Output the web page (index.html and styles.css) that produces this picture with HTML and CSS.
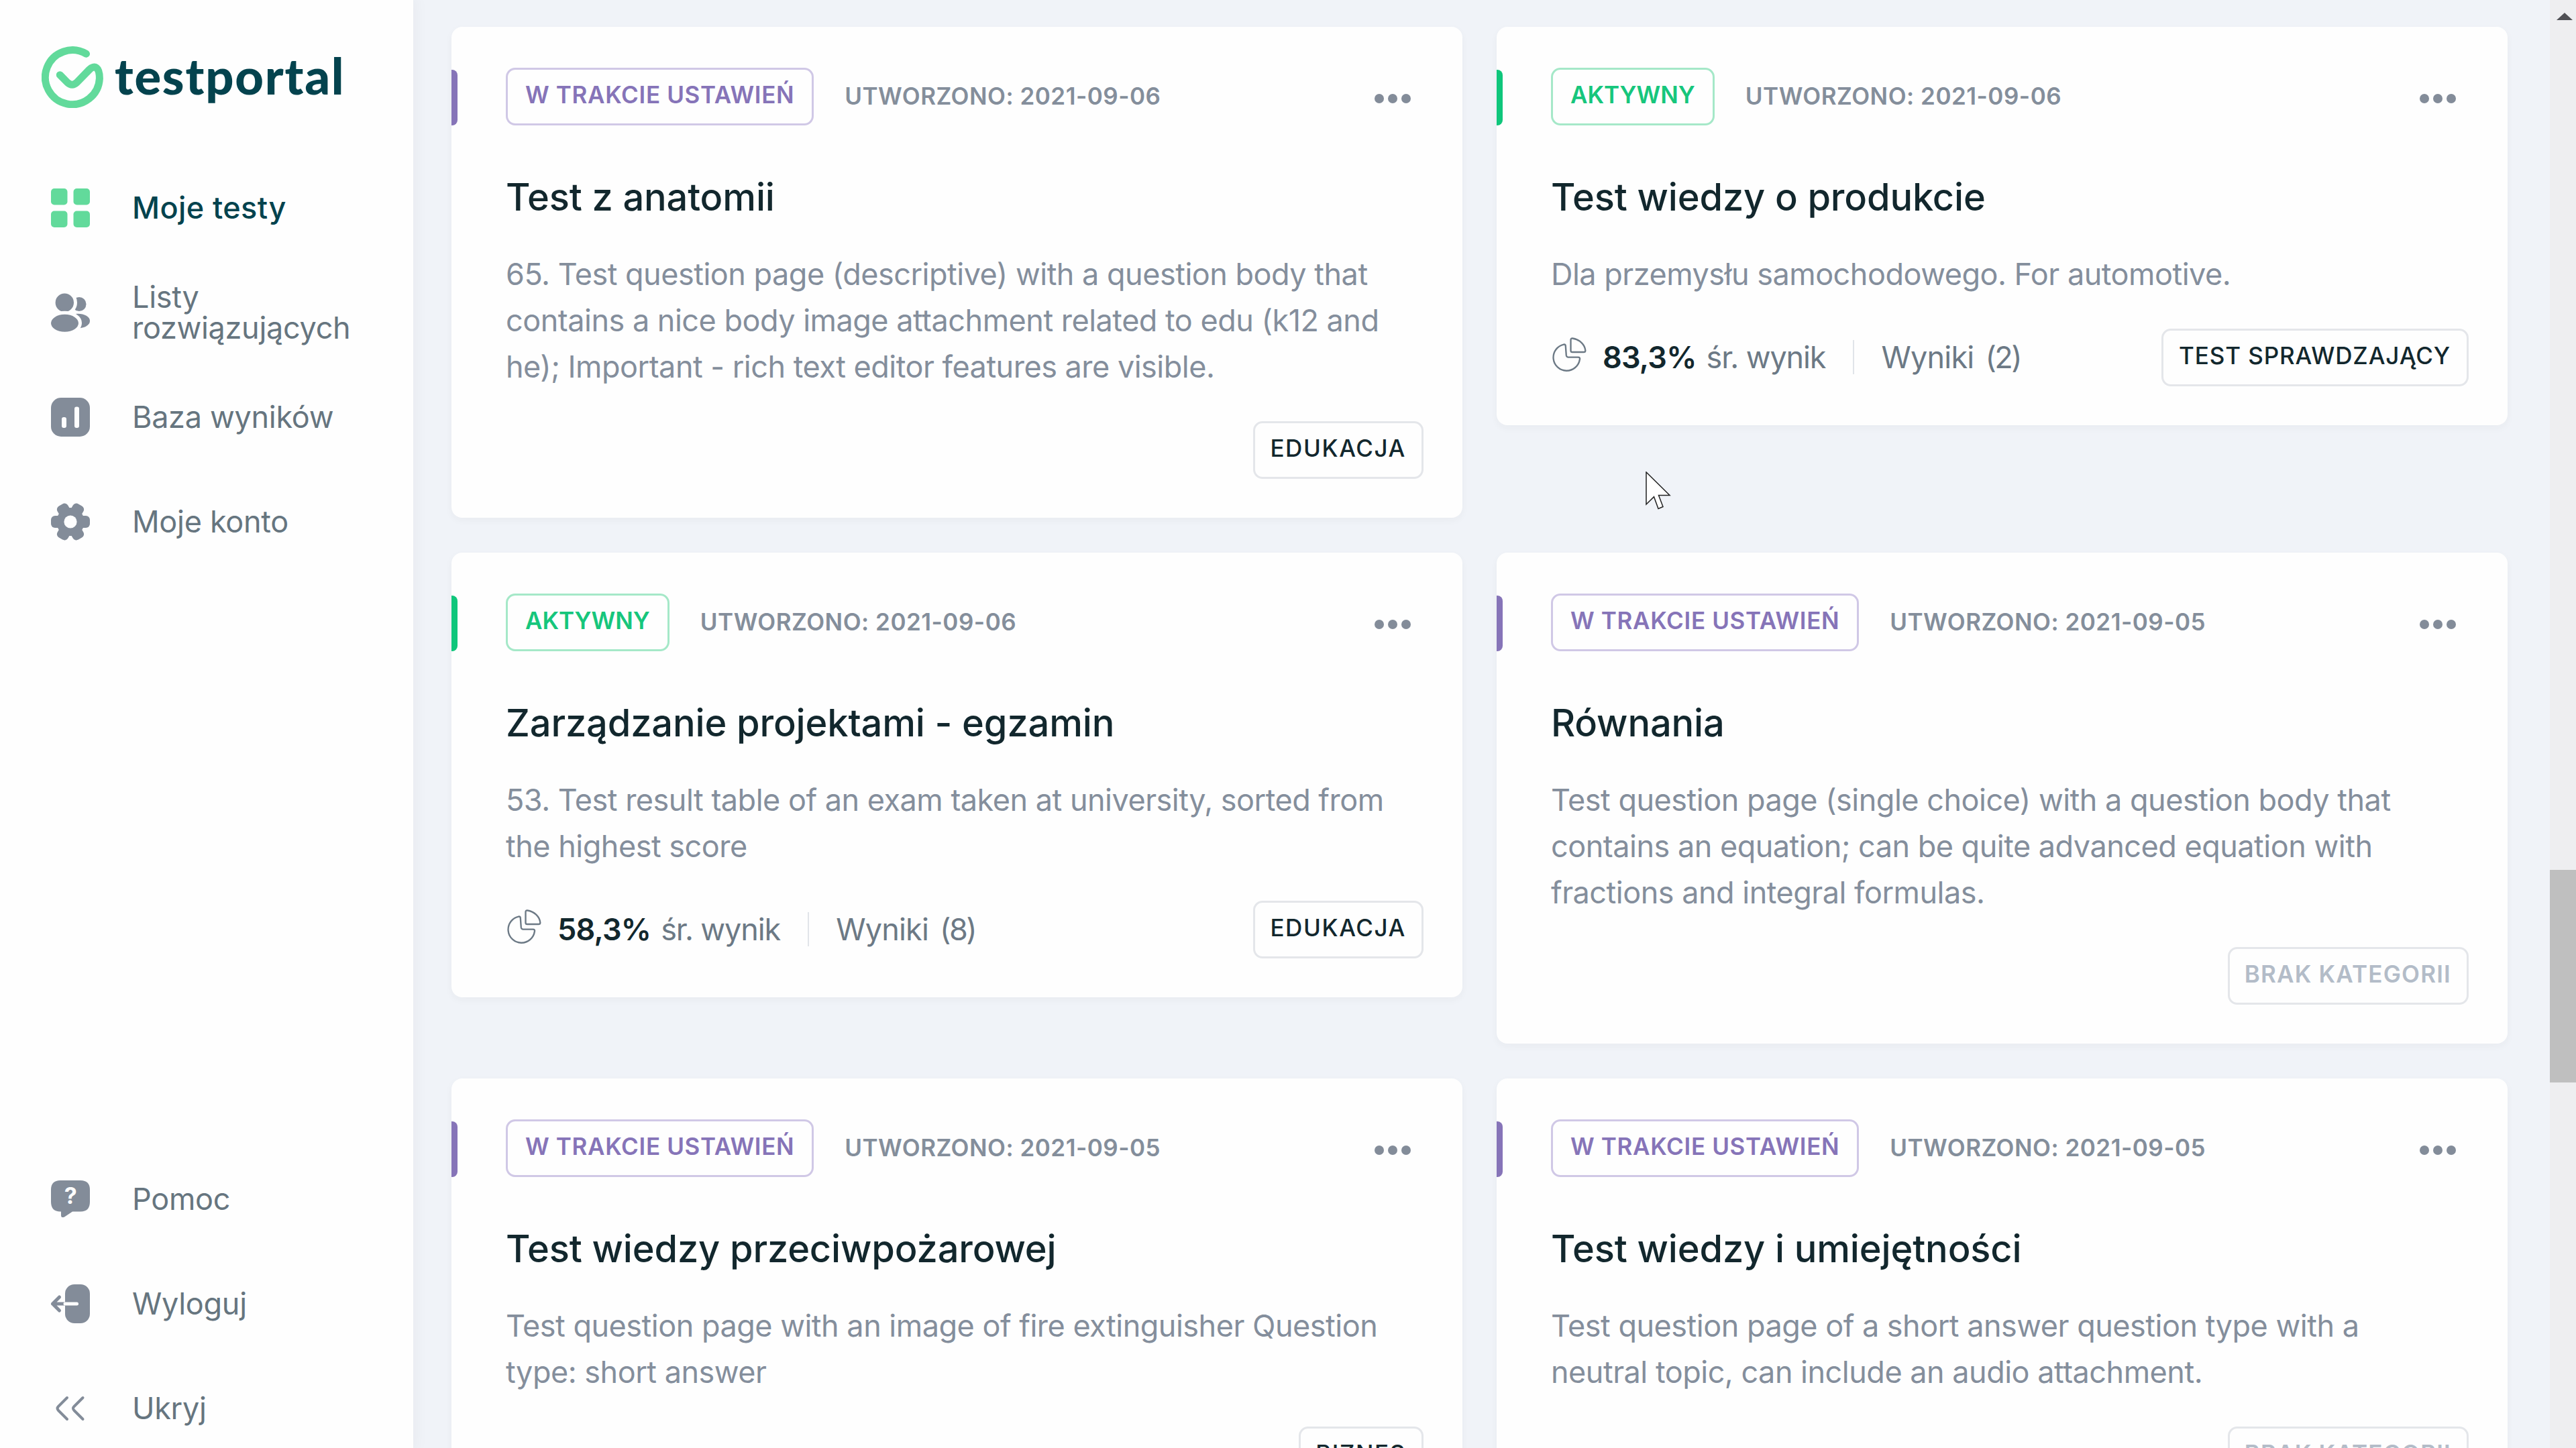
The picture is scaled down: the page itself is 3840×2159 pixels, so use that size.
FILE: index.html
```
<!DOCTYPE html>
<html lang="pl">
<head>
    <meta charset="UTF-8">
    <meta name="viewport" content="width=device-width, initial-scale=1.0">
    <title>Testportal - Moje testy</title>
    <link rel="stylesheet" href="styles.css">
</head>
<body>
    <!-- shared icons -->
    <svg class="sprite" aria-hidden="true">
        <symbol id="icon-pie" viewBox="42 36 152 154">
            <path d="M124 50 Q124 42 132 43 C162 47 186 70 189 97 Q189 104 181 104 L131 104 Q124 104 124 97 Z"/>
            <path d="M93 70 A59 59 0 1 0 164 136 Q166 127 157 127 L112 127 Q105 126 104 118 L101 76 Q100 69 93 70 Z"/>
        </symbol>
    </svg>

    <div class="layout">
        <aside class="sidebar">
            <div class="sidebar-top">
                <div class="logo">
                    <svg class="logo-mark" viewBox="12 19 92 92">
                        <path d="M78.5 30.3 A40.5 40.5 0 1 0 98.4 67 C98.4 50 91 46 83 54 L64.5 73 Q57.5 79.5 50.5 73 L39.3 61.7"/>
                    </svg>
                    <span class="logo-text">testportal</span>
                </div>
                <nav class="menu">
                    <a class="menu-item active">
                        <svg class="icon" viewBox="0 0 58 58">
                            <rect width="24.5" height="24.5" rx="5"/>
                            <rect x="33.5" width="24.5" height="24.5" rx="5"/>
                            <rect y="33.5" width="24.5" height="24.5" rx="5"/>
                            <rect x="33.5" y="33.5" width="24.5" height="24.5" rx="5"/>
                        </svg>
                        <span>Moje testy</span>
                    </a>
                    <a class="menu-item">
                        <svg class="icon" viewBox="0 0 58 58">
                            <circle cx="42" cy="16.5" r="10.5"/>
                            <ellipse cx="40" cy="41.5" rx="18" ry="10.8"/>
                            <circle class="cutout" cx="20.3" cy="14.3" r="16.2"/>
                            <ellipse class="cutout" cx="20.5" cy="44.8" rx="23" ry="15.5"/>
                        </svg>
                        <span>Listy<br>rozwiązujących</span>
                    </a>
                    <a class="menu-item">
                        <svg class="icon" viewBox="0 0 58 58">
                            <rect width="58" height="58" rx="15"/>
                            <rect class="white" x="16" y="29" width="7" height="16" rx="3"/>
                            <rect class="white" x="35" y="13.5" width="7" height="31.5" rx="3"/>
                        </svg>
                        <span>Baza wyników</span>
                    </a>
                    <a class="menu-item">
                        <svg class="icon" viewBox="0 0 58 58">
                            <circle cx="29" cy="29" r="21"/>
                            <rect y="20" width="58" height="18" rx="6"/>
                            <rect y="20" width="58" height="18" rx="6" transform="rotate(60 29 29)"/>
                            <rect y="20" width="58" height="18" rx="6" transform="rotate(120 29 29)"/>
                            <circle class="white" cx="29" cy="29" r="9.6"/>
                        </svg>
                        <span>Moje konto</span>
                    </a>
                </nav>
            </div>
            <nav class="menu menu-bottom">
                <a class="menu-item">
                    <svg class="icon" viewBox="0 0 58 58">
                        <path d="M14 1 H44 Q58 1 58 15 V33 Q58 47.5 44 47.5 H32 L20 55.5 Q15 57.5 15 53 V47.5 H14 Q0 47.5 0 33 V15 Q0 1 14 1 Z"/>
                        <text class="question" x="29" y="36" text-anchor="middle">?</text>
                    </svg>
                    <span>Pomoc</span>
                </a>
                <a class="menu-item">
                    <svg class="icon" viewBox="0 0 58 58">
                        <rect x="21" width="37" height="58" rx="14"/>
                        <path class="line" d="M21 29 H2.5 M12.5 19 L2.5 29 L12.5 39"/>
                        <path class="line line-white" d="M21 29 H38.5"/>
                    </svg>
                    <span>Wyloguj</span>
                </a>
                <a class="menu-item">
                    <svg class="icon" viewBox="0 0 58 58">
                        <path class="line line-thin" d="M24 13 L11 26 Q8 29 11 32 L24 45 M47.5 13 L34.5 26 Q31.5 29 34.5 32 L47.5 45"/>
                    </svg>
                    <span>Ukryj</span>
                </a>
            </nav>
        </aside>

        <main class="tests">
            <article class="card draft">
                <div class="card-header">
                    <span class="tag status">W TRAKCIE USTAWIEŃ</span>
                    <span class="date">UTWORZONO: 2021-09-06</span>
                    <span class="dots"><i></i><i></i><i></i></span>
                </div>
                <h2>Test z anatomii</h2>
                <p>65. Test question page (descriptive) with a question body that<br>contains a nice body image attachment related to edu (k12 and<br>he); Important - rich text editor features are visible.</p>
                <div class="card-footer">
                    <span class="tag category short">EDUKACJA</span>
                </div>
            </article>

            <article class="card live">
                <div class="card-header">
                    <span class="tag status">AKTYWNY</span>
                    <span class="date">UTWORZONO: 2021-09-06</span>
                    <span class="dots"><i></i><i></i><i></i></span>
                </div>
                <h2>Test wiedzy o produkcie</h2>
                <p>Dla przemysłu samochodowego. For automotive.</p>
                <div class="card-footer">
                    <div class="stats">
                        <svg class="pie"><use href="#icon-pie"/></svg>
                        <strong>83,3%</strong>
                        <span class="average">śr. wynik</span>
                        <span class="results">Wyniki</span>
                        <span class="count">(2)</span>
                    </div>
                    <span class="tag category">TEST SPRAWDZAJĄCY</span>
                </div>
            </article>

            <article class="card live">
                <div class="card-header">
                    <span class="tag status">AKTYWNY</span>
                    <span class="date">UTWORZONO: 2021-09-06</span>
                    <span class="dots"><i></i><i></i><i></i></span>
                </div>
                <h2>Zarządzanie projektami - egzamin</h2>
                <p>53. Test result table of an exam taken at university, sorted from<br>the highest score</p>
                <div class="card-footer">
                    <div class="stats">
                        <svg class="pie"><use href="#icon-pie"/></svg>
                        <strong>58,3%</strong>
                        <span class="average">śr. wynik</span>
                        <span class="results">Wyniki</span>
                        <span class="count">(8)</span>
                    </div>
                    <span class="tag category short">EDUKACJA</span>
                </div>
            </article>

            <article class="card draft">
                <div class="card-header">
                    <span class="tag status">W TRAKCIE USTAWIEŃ</span>
                    <span class="date">UTWORZONO: 2021-09-05</span>
                    <span class="dots"><i></i><i></i><i></i></span>
                </div>
                <h2>Równania</h2>
                <p>Test question page (single choice) with a question body that<br>contains an equation; can be quite advanced equation with<br>fractions and integral formulas.</p>
                <div class="card-footer">
                    <span class="tag category none">BRAK KATEGORII</span>
                </div>
            </article>

            <article class="card draft">
                <div class="card-header">
                    <span class="tag status">W TRAKCIE USTAWIEŃ</span>
                    <span class="date">UTWORZONO: 2021-09-05</span>
                    <span class="dots"><i></i><i></i><i></i></span>
                </div>
                <h2>Test wiedzy przeciwpożarowej</h2>
                <p>Test question page with an image of fire extinguisher Question<br>type: short answer</p>
                <div class="card-footer">
                    <span class="tag category short">BIZNES</span>
                </div>
            </article>

            <article class="card draft">
                <div class="card-header">
                    <span class="tag status">W TRAKCIE USTAWIEŃ</span>
                    <span class="date">UTWORZONO: 2021-09-05</span>
                    <span class="dots"><i></i><i></i><i></i></span>
                </div>
                <h2>Test wiedzy i umiejętności</h2>
                <p>Test question page of a short answer question type with a<br>neutral topic, can include an audio attachment.</p>
                <div class="card-footer">
                    <span class="tag category none">BRAK KATEGORII</span>
                </div>
            </article>
        </main>

        <div class="scrollbar">
            <div class="scroll-arrow"></div>
            <div class="scroll-thumb"></div>
        </div>
    </div>

    <svg class="cursor" viewBox="-1 -1 38 58">
        <path d="M0 0 V48 L11.5 36.7 L18 54.5 L25 51.5 L18.5 34.5 H35 Z"/>
    </svg>
</body>
</html>
```
FILE: styles.css
```
*{
    margin: 0;
    padding: 0;
    box-sizing: border-box;
}

body{
    height: 2159px;
    overflow: hidden;
    background-color: #f0f3f8;
    font-family: Inter, "Liberation Sans", sans-serif;
    font-size: 45px;
}

.sprite{
    display: none;
}

.layout{
    display: flex;
    height: 2159px;
    overflow: hidden;
}

/* sidebar */
.sidebar{
    flex: none;
    width: 616px;
    display: flex;
    flex-direction: column;
    justify-content: space-between;
    background-color: #fefefe;
    box-shadow: 0 0 20px 4px rgba(40, 30, 30, 0.04);
}

.logo{
    display: flex;
    align-items: center;
    gap: 17px;
    padding: 69px 0 71px 62px;
}

.logo-mark{
    width: 92px;
    height: 92px;
}

.logo-mark path{
    fill: none;
    stroke: #62da9b;
    stroke-width: 11;
    stroke-linecap: round;
    stroke-linejoin: round;
}

.logo-text{
    padding-bottom: 4px;
    font-family: Lato, sans-serif;
    font-size: 74px;
    font-weight: 900;
    line-height: 80px;
    letter-spacing: 1.8px;
    color: #04434e;
}

.menu-item{
    display: flex;
    align-items: center;
    gap: 63px;
    height: 156px;
    padding-left: 76px;
    color: #66757f;
    line-height: 46px;
    letter-spacing: -0.3px;
}

.menu-item.active{
    color: #04434e;
    font-weight: 500;
    letter-spacing: 0.4px;
}

.menu-bottom{
    margin-bottom: -19px;
}

.icon{
    width: 58px;
    height: 58px;
    fill: #838c99;
    overflow: visible;
}

.active .icon{
    fill: #62da9b;
}

.icon .white{
    fill: #fefefe;
}

.icon .cutout{
    stroke: #fefefe;
    stroke-width: 5;
}

.icon .line{
    fill: none;
    stroke: #838c99;
    stroke-width: 5;
    stroke-linecap: round;
    stroke-linejoin: round;
}

.icon .line-white{
    stroke: #fefefe;
}

.icon .line-thin{
    stroke-width: 4;
}

.question{
    fill: #fefefe;
    font-size: 34px;
    font-weight: 700;
}

/* cards */
.tests{
    flex: none;
    width: 3185px;
    display: grid;
    grid-template-columns: 1507px 1507px;
    grid-auto-rows: 732px;
    gap: 52px 51px;
    align-items: start;
    padding: 40px 0 0 57px;
}

.card{
    padding: 61px 58px 58px 81px;
    border-radius: 16px;
    background-color: #fefefe;
    box-shadow: 0 4px 12px rgba(40, 40, 60, 0.04);
}

.card-header{
    position: relative;
    display: flex;
    align-items: center;
    height: 86px;
}

/* coloured marker on the card edge */
.card-header::before{
    content: "";
    position: absolute;
    left: -81px;
    top: 3px;
    width: 9px;
    height: 83px;
    border-radius: 0 8px 8px 0;
    background-color: #8674b8;
}

.live .card-header::before{
    background-color: #0fc67b;
}

.tag{
    height: 86px;
    padding: 0 26px 5px;
    border: 3px solid #e4e6ea;
    border-radius: 14px;
    font-size: 35px;
    font-weight: 600;
    line-height: 75px;
    letter-spacing: 0.65px;
    white-space: nowrap;
}

.draft .status{
    color: #8674b8;
    border-color: #d0c8e6;
}

.live .status{
    color: #16c67c;
    border-color: #a5e8c8;
    letter-spacing: 0;
}

.date{
    margin-left: 46px;
    padding-bottom: 2px;
    font-size: 35px;
    font-weight: 600;
    letter-spacing: 0.5px;
    color: #848e9b;
}

.dots{
    display: flex;
    gap: 6px;
    margin: 6px 19px 0 auto;
}

.dots i{
    width: 14px;
    height: 14px;
    border-radius: 50%;
    background-color: #838c99;
}

.card h2{
    margin-top: 73px;
    font-size: 56px;
    font-weight: 550;
    line-height: 68px;
    letter-spacing: -0.15px;
    color: #12272d;
}

.card p{
    margin-top: 46px;
    line-height: 69px;
    letter-spacing: -0.5px;
    white-space: nowrap;
    color: #848e9c;
}

.card-footer{
    display: flex;
    height: 86px;
    margin-top: 47px;
}

.category{
    margin-left: auto;
    padding: 0 24px 5px 23px;
    font-weight: 500;
    letter-spacing: 0.9px;
    color: #12272d;
}

.category.short{
    padding: 0 23px 5px 22px;
    letter-spacing: 1.6px;
}

.category.none{
    padding: 0 23px 5px 22px;
    font-weight: 600;
    letter-spacing: 1.2px;
    color: #b3bcc8;
}

.stats{
    display: flex;
    align-items: center;
    padding-bottom: 2px;
    color: #6c7985;
}

.pie{
    width: 51px;
    height: 52px;
    margin: 0 24px 8px 2px;
    fill: none;
    stroke: #6c7985;
    stroke-width: 7;
}

.stats strong{
    font-weight: 600;
    letter-spacing: -0.8px;
    color: #12272d;
}

.average{
    margin-left: 15px;
    letter-spacing: -1.1px;
}

.results{
    margin-left: 41px;
    padding-left: 40px;
    border-left: 2px solid #e1e4e9;
    line-height: 51px;
    letter-spacing: -0.8px;
}

.count{
    margin-left: 17px;
    letter-spacing: -2.5px;
}

/* scrollbar */
.scrollbar{
    flex: 1;
    background-color: #eeeef0;
}

.scroll-arrow{
    width: 24px;
    margin: 19px 0 0 10px;
    border: 12px solid transparent;
    border-top: none;
    border-bottom: 11px solid #505055;
}

.scroll-thumb{
    height: 317px;
    margin-top: 1267px;
    background-color: #bfbfbf;
}

.cursor{
    position: absolute;
    left: 2453px;
    top: 703px;
    width: 38px;
    height: 58px;
    fill: #fff;
    stroke: #222;
    stroke-width: 1.5;
}
```
